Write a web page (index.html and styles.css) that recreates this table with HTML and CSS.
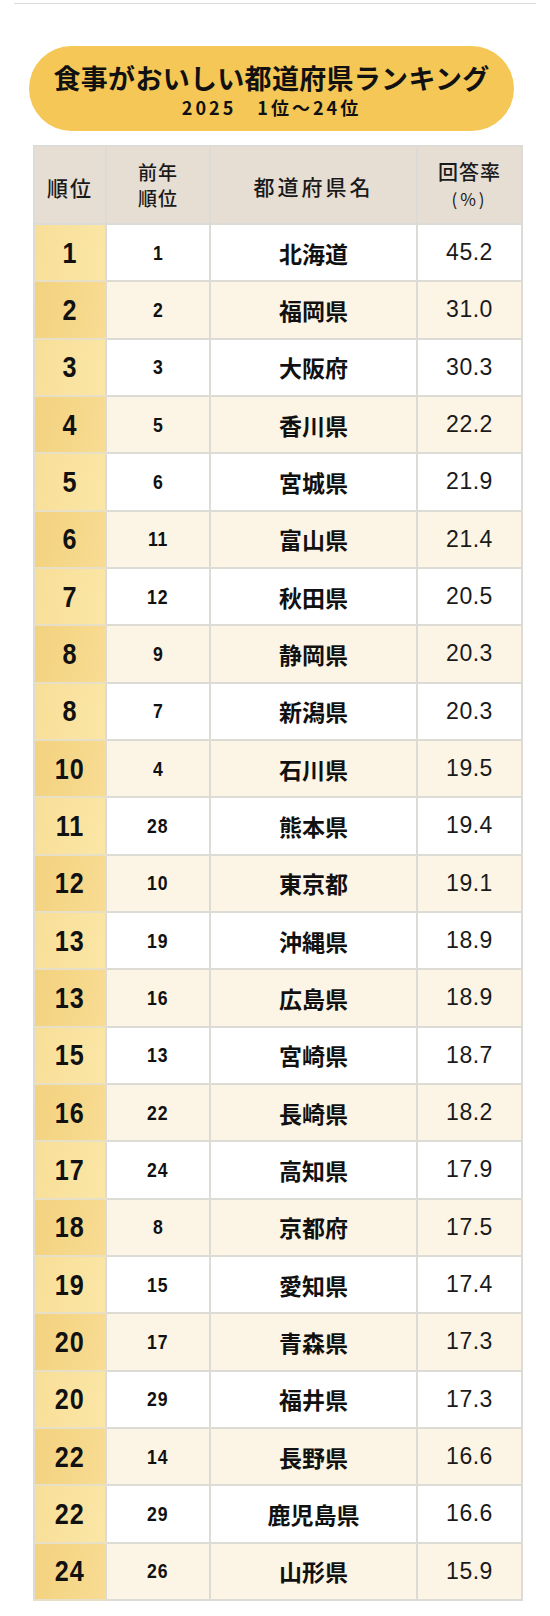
FILE: index.html
```html
<!DOCTYPE html>
<html lang="ja">
<head>
<meta charset="utf-8">
<title>食事がおいしい都道府県ランキング</title>
<link rel="stylesheet" href="styles.css">
</head>
<body>
<div class="page">
  <div class="topline"></div>
  <div class="pill">
    <div class="pill-title">食事がおいしい都道府県ランキング</div>
    <div class="pill-sub">2025　1位～24位</div>
  </div>
  <table class="rank">
    <thead>
      <tr>
        <th class="c-rank">順位</th>
        <th class="c-prev">前年<br>順位</th>
        <th class="c-name">都道府県名</th>
        <th class="c-rate"><span class="rate-h">回答率</span><br><span class="pct">(%)</span></th>
      </tr>
    </thead>
    <tbody>
      <tr><td class="rk"><span class="cd">1</span></td><td class="pv"><span class="cd">1</span></td><td class="nm">北海道</td><td class="rt">45.2</td></tr>
      <tr><td class="rk"><span class="cd">2</span></td><td class="pv"><span class="cd">2</span></td><td class="nm">福岡県</td><td class="rt">31.0</td></tr>
      <tr><td class="rk"><span class="cd">3</span></td><td class="pv"><span class="cd">3</span></td><td class="nm">大阪府</td><td class="rt">30.3</td></tr>
      <tr><td class="rk"><span class="cd">4</span></td><td class="pv"><span class="cd">5</span></td><td class="nm">香川県</td><td class="rt">22.2</td></tr>
      <tr><td class="rk"><span class="cd">5</span></td><td class="pv"><span class="cd">6</span></td><td class="nm">宮城県</td><td class="rt">21.9</td></tr>
      <tr><td class="rk"><span class="cd">6</span></td><td class="pv"><span class="cd">11</span></td><td class="nm">富山県</td><td class="rt">21.4</td></tr>
      <tr><td class="rk"><span class="cd">7</span></td><td class="pv"><span class="cd">12</span></td><td class="nm">秋田県</td><td class="rt">20.5</td></tr>
      <tr><td class="rk"><span class="cd">8</span></td><td class="pv"><span class="cd">9</span></td><td class="nm">静岡県</td><td class="rt">20.3</td></tr>
      <tr><td class="rk"><span class="cd">8</span></td><td class="pv"><span class="cd">7</span></td><td class="nm">新潟県</td><td class="rt">20.3</td></tr>
      <tr><td class="rk"><span class="cd">10</span></td><td class="pv"><span class="cd">4</span></td><td class="nm">石川県</td><td class="rt">19.5</td></tr>
      <tr><td class="rk"><span class="cd">11</span></td><td class="pv"><span class="cd">28</span></td><td class="nm">熊本県</td><td class="rt">19.4</td></tr>
      <tr><td class="rk"><span class="cd">12</span></td><td class="pv"><span class="cd">10</span></td><td class="nm">東京都</td><td class="rt">19.1</td></tr>
      <tr><td class="rk"><span class="cd">13</span></td><td class="pv"><span class="cd">19</span></td><td class="nm">沖縄県</td><td class="rt">18.9</td></tr>
      <tr><td class="rk"><span class="cd">13</span></td><td class="pv"><span class="cd">16</span></td><td class="nm">広島県</td><td class="rt">18.9</td></tr>
      <tr><td class="rk"><span class="cd">15</span></td><td class="pv"><span class="cd">13</span></td><td class="nm">宮崎県</td><td class="rt">18.7</td></tr>
      <tr><td class="rk"><span class="cd">16</span></td><td class="pv"><span class="cd">22</span></td><td class="nm">長崎県</td><td class="rt">18.2</td></tr>
      <tr><td class="rk"><span class="cd">17</span></td><td class="pv"><span class="cd">24</span></td><td class="nm">高知県</td><td class="rt">17.9</td></tr>
      <tr><td class="rk"><span class="cd">18</span></td><td class="pv"><span class="cd">8</span></td><td class="nm">京都府</td><td class="rt">17.5</td></tr>
      <tr><td class="rk"><span class="cd">19</span></td><td class="pv"><span class="cd">15</span></td><td class="nm">愛知県</td><td class="rt">17.4</td></tr>
      <tr><td class="rk"><span class="cd">20</span></td><td class="pv"><span class="cd">17</span></td><td class="nm">青森県</td><td class="rt">17.3</td></tr>
      <tr><td class="rk"><span class="cd">20</span></td><td class="pv"><span class="cd">29</span></td><td class="nm">福井県</td><td class="rt">17.3</td></tr>
      <tr><td class="rk"><span class="cd">22</span></td><td class="pv"><span class="cd">14</span></td><td class="nm">長野県</td><td class="rt">16.6</td></tr>
      <tr><td class="rk"><span class="cd">22</span></td><td class="pv"><span class="cd">29</span></td><td class="nm">鹿児島県</td><td class="rt">16.6</td></tr>
      <tr><td class="rk"><span class="cd">24</span></td><td class="pv"><span class="cd">26</span></td><td class="nm">山形県</td><td class="rt">15.9</td></tr>
    </tbody>
  </table>
</div>
</body>
</html>
```

FILE: styles.css
```css
html, body {
  margin: 0;
  padding: 0;
  background: #ffffff;
}

body {
  font-family: "Noto Sans CJK JP", "Noto Sans", sans-serif;
  color: #111111;
}

.page {
  width: 550px;
  padding-top: 3px;
}

.topline {
  margin-left: 14px;
  width: 522px;
  height: 1px;
  background: #dcdcdc;
}

.pill {
  margin: 42px 0 0 29px;
  width: 485px;
  height: 85px;
  border-radius: 43px;
  background: #f5c756;
  display: flex;
  flex-direction: column;
  align-items: center;
  justify-content: center;
  box-sizing: border-box;
  padding-top: 2px;
}

.pill-title {
  font-family: "Noto Sans CJK JP", sans-serif;
  font-weight: 700;
  font-size: 27px;
  line-height: 34px;
  color: #111111;
  letter-spacing: 0.3px;
}

.pill-sub {
  font-family: "Noto Sans CJK JP", sans-serif;
  font-weight: 700;
  font-size: 18px;
  line-height: 24px;
  letter-spacing: 3px;
  color: #111111;
}

.rank {
  margin: 14px 0 0 33px;
  width: 480px;
  border-collapse: collapse;
  table-layout: fixed;
}

.rank th,
.rank td {
  border: 2px solid #dddbd6;
  padding: 0;
  text-align: center;
  vertical-align: middle;
}

.rank thead tr {
  height: 78px;
}

.rank th {
  background: #e6ddd3;
  font-family: "Noto Sans CJK JP", sans-serif;
  font-weight: 500;
  color: #1a1a1a;
}

.c-rank { width: 70px; font-size: 21px; letter-spacing: 2px; line-height: 26px; padding-top: 4px !important; }
.c-prev { width: 102px; font-size: 19px; line-height: 26px; letter-spacing: 1px; }
.c-name { width: 205px; font-size: 21px; letter-spacing: 3px; padding-top: 2px !important; }
.c-rate { width: 103px; font-size: 20px; line-height: 26px; letter-spacing: 1px; }

.pct {
  font-size: 17px;
  font-weight: 400;
  letter-spacing: 3px;
}

.rank tbody tr {
  height: 57.33px;
}

.rank tbody tr:nth-child(odd) td {
  background: #ffffff;
}

.rank tbody tr:nth-child(even) td {
  background: #fcf5e6;
}

.rank tbody tr:nth-child(odd) td.rk {
  background: linear-gradient(100deg, #f8df98 0%, #fbe6a6 100%);
}

.rank tbody tr:nth-child(even) td.rk {
  background: linear-gradient(100deg, #f3d27f 0%, #f8dc93 100%);
}

.cd {
  display: inline-block;
  transform: scaleX(0.84);
}

.rk {
  font-family: "Liberation Sans", sans-serif;
  font-weight: 700;
  font-size: 30px;
  letter-spacing: 1px;
  color: #111111;
  border-color: #e8dfc7 #dddbd6 #e8dfc7 #dddbd6 !important;
}

.pv {
  font-family: "Liberation Sans", sans-serif;
  font-weight: 700;
  font-size: 21px;
  letter-spacing: 1px;
  color: #111111;
}

.nm {
  font-family: "Noto Sans CJK JP", sans-serif;
  font-weight: 700;
  font-size: 23px;
  color: #111111;
}

.rt {
  font-family: "Liberation Sans", "Noto Sans", sans-serif;
  font-weight: 400;
  font-size: 23px;
  color: #1a1a1a;
  letter-spacing: 0.5px;
}
```
